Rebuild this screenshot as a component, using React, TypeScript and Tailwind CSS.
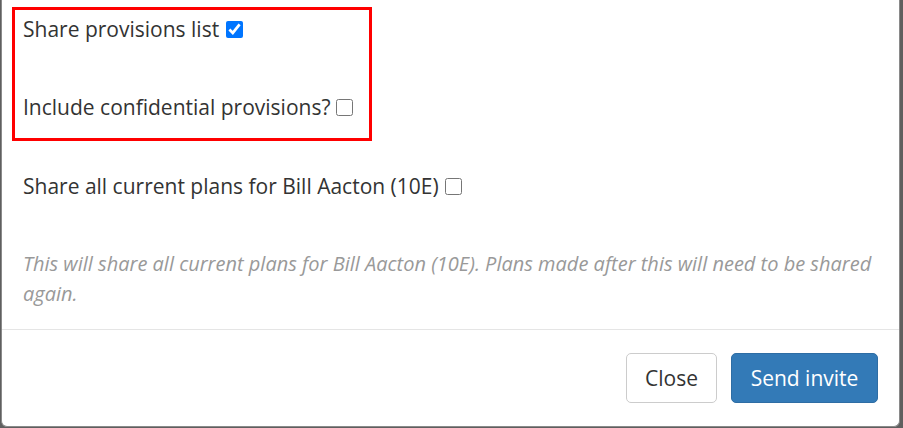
export default function App() {
  return (
    <div className="h-[428px] w-[903px] overflow-hidden bg-[#5f5f5f] font-['Open_Sans',sans-serif]">
      <div className="ml-[1px] flex h-[427px] w-[899px] flex-col rounded-b-[6px] border-x border-b border-[#8a8a8a] bg-white text-[21px] leading-[28px] text-[#333]">
        <div className="flex-1 px-[21px] pt-[7px]">
          <div className="-ml-[11px] w-[360px] border-[3px] border-[#ff0000] pb-[17px] pl-[8px] pt-[5px]">
            <label className="flex items-center">
              <span>Share provisions list</span>
              <input type="checkbox" defaultChecked className="ml-[7px] h-[17px] w-[17px]" />
            </label>
            <label className="mt-[50px] flex items-center">
              <span>Include confidential provisions?</span>
              <input type="checkbox" className="ml-[5px] h-[17px] w-[17px]" />
            </label>
          </div>
          <label className="mt-[31px] flex items-center">
            <span>Share all current plans for Bill Aacton (10E)</span>
            <input type="checkbox" className="ml-[6px] h-[17px] w-[17px]" />
          </label>
          <p className="mt-[49px] text-[20px] leading-[30px] italic text-[#999]">
            This will share all current plans for Bill Aacton (10E). Plans made after this will need to be shared
            again.
          </p>
        </div>
        <div className="flex justify-end gap-[14px] border-t border-[#e5e5e5] px-[21px] pb-[23px] pt-[23px]">
          <button
            type="button"
            className="h-[50px] w-[91px] rounded-[5px] border border-[#ccc] bg-white text-[#333]"
          >
            Close
          </button>
          <button
            type="button"
            className="h-[50px] w-[147px] rounded-[5px] border border-[#2e6da4] bg-[#337ab7] text-white"
          >
            Send invite
          </button>
        </div>
      </div>
    </div>
  );
}
